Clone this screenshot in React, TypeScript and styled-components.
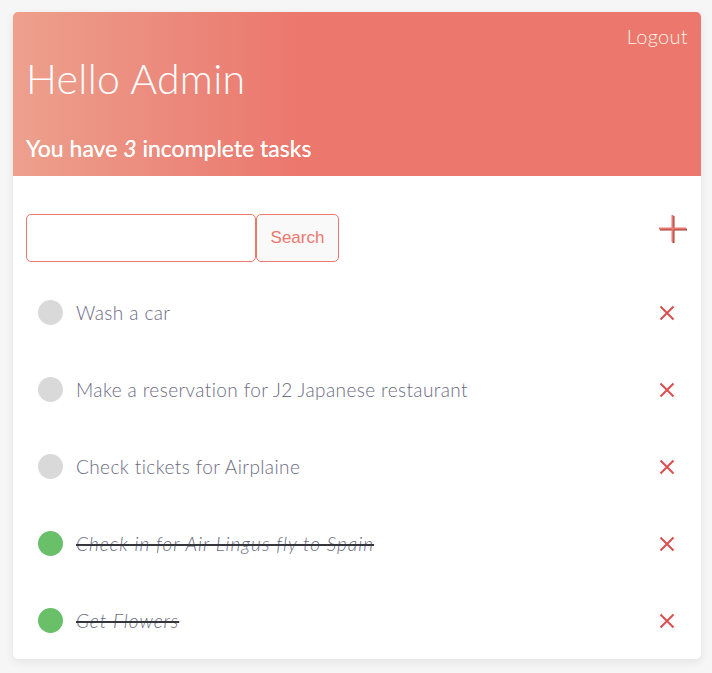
import React from "react";
import styled, { createGlobalStyle } from "styled-components";

const Global = createGlobalStyle`
  html, body { margin: 0; padding: 0; background: #f6f6f6; }
  body { font-family: "Lato", "Open Sans", sans-serif; }
`;

const Card = styled.div`
  margin: 12px 11px 13px 13px;
  width: 688px;
  background: #fff;
  border-radius: 5px;
  box-shadow: 0 3px 10px rgba(0, 0, 0, 0.08);
  overflow: hidden;
`;

const Header = styled.header`
  height: 164px;
  box-sizing: border-box;
  padding: 12px 13px 0 13px;
  background: linear-gradient(90deg, #eea08d 0%, #eb8a7d 22%, #ec776d 42%, #ec776d 100%);
  color: #fff;
  display: flex;
  flex-direction: column;
`;

const Logout = styled.a`
  align-self: flex-end;
  font-size: 20px;
  font-weight: 300;
  color: #fff3e6;
  cursor: pointer;
  line-height: 24px;
  letter-spacing: 0.3px;
`;

const Title = styled.h1`
  margin: 6px 0 0 0;
  font-size: 41px;
  font-weight: 300;
  line-height: 50px;
  letter-spacing: 0.3px;
`;

const Subtitle = styled.p`
  margin: 30px 0 0 0;
  font-size: 23px;
  font-weight: 400;
  line-height: 28px;
  text-shadow: 0 0 0.4px #fff;
  em { font-style: italic; }
`;

const Body = styled.div`
  padding: 38px 13px 0 13px;
`;

const SearchRow = styled.div`
  display: flex;
  align-items: flex-start;
  justify-content: space-between;
`;

const SearchForm = styled.form`
  display: flex;
`;

const Input = styled.input`
  width: 230px;
  height: 48px;
  box-sizing: border-box;
  border: 1px solid #ec776d;
  border-radius: 5px;
  outline: none;
  padding: 0 10px;
  font-size: 16px;
`;

const SearchButton = styled.button`
  height: 48px;
  width: 83px;
  box-sizing: border-box;
  border: 1px solid #ec776d;
  border-radius: 5px;
  background: #f9f9f9;
  color: #ec776d;
  font-family: "Liberation Sans", Arial, sans-serif;
  font-size: 17px;
`;

const AddButton = styled.button`
  border: none;
  background: none;
  padding: 0;
  margin-right: 1px;
  width: 28px;
  height: 28px;
  cursor: pointer;
  svg { display: block; filter: drop-shadow(1px 1.5px 0 #9a3c36); }
`;

const List = styled.ul`
  list-style: none;
  margin: 12px 0 0 0;
  padding: 0;
`;

const Row = styled.li`
  height: 77px;
  display: flex;
  align-items: center;
  padding: 0 13px 0 12px;
`;

const Dot = styled.span<{ $done: boolean }>`
  width: 25px;
  height: 25px;
  border-radius: 50%;
  background: ${(p) => (p.$done ? "#6abf69" : "#d9d9d9")};
  flex: none;
`;

const TaskText = styled.span<{ $done: boolean }>`
  margin-left: 13px;
  flex: 1;
  font-size: 19px;
  font-weight: 300;
  color: #6b6b82;
  letter-spacing: ${(p) => (p.$done ? "1px" : "0.4px")};
  font-style: ${(p) => (p.$done ? "italic" : "normal")};
  text-decoration: ${(p) => (p.$done ? "line-through" : "none")};
  text-decoration-color: #35353c;
  text-decoration-thickness: 2px;
`;

const Remove = styled.button`
  border: none;
  background: none;
  padding: 0;
  width: 16px;
  height: 16px;
  cursor: pointer;
  svg { display: block; }
`;

const tasks = [
  { text: "Wash a car", done: false },
  { text: "Make a reservation for J2 Japanese restaurant", done: false },
  { text: "Check tickets for Airplaine", done: false },
  { text: "Check in for Air Lingus fly to Spain", done: true },
  { text: "Get Flowers", done: true },
];

export default function App() {
  const incomplete = tasks.filter((t) => !t.done).length;
  return (
    <>
      <Global />
      <Card>
        <Header>
          <Logout>Logout</Logout>
          <Title>Hello Admin</Title>
          <Subtitle>
            You have <em>{incomplete}</em> incomplete tasks
          </Subtitle>
        </Header>
        <Body>
          <SearchRow>
            <SearchForm onSubmit={(e) => e.preventDefault()}>
              <Input type="text" />
              <SearchButton type="submit">Search</SearchButton>
            </SearchForm>
            <AddButton aria-label="Add task">
              <svg width="27" height="27" viewBox="0 0 27 27">
                <path d="M13.5 0 V27 M0 13.5 H27" stroke="#ec776d" strokeWidth="2" />
              </svg>
            </AddButton>
          </SearchRow>
          <List>
            {tasks.map((t) => (
              <Row key={t.text}>
                <Dot $done={t.done} />
                <TaskText $done={t.done}>{t.text}</TaskText>
                <Remove aria-label="Remove">
                  <svg width="16" height="16" viewBox="0 0 16 16">
                    <path d="M1.5 1.5 L14.5 14.5 M14.5 1.5 L1.5 14.5" stroke="#de4d4f" strokeWidth="2" />
                  </svg>
                </Remove>
              </Row>
            ))}
          </List>
        </Body>
      </Card>
    </>
  );
}
